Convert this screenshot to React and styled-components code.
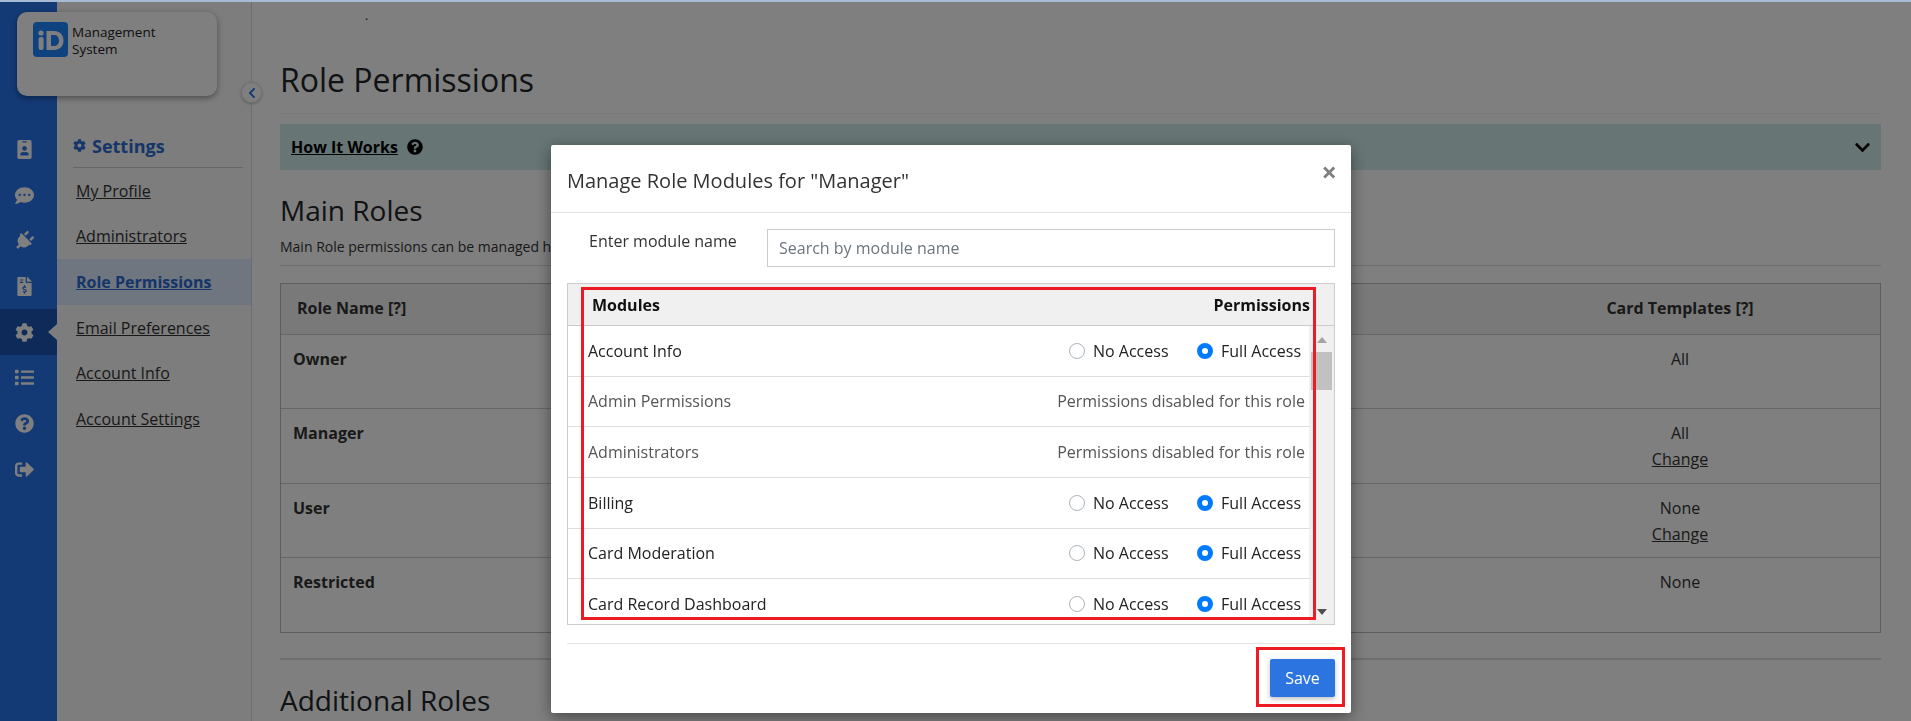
import styled, { createGlobalStyle } from "styled-components";
import {
  FaIdBadge,
  FaCommentDots,
  FaPlug,
  FaFileInvoiceDollar,
  FaCog,
  FaList,
  FaQuestionCircle,
  FaSignOutAlt,
  FaChevronDown,
  FaChevronLeft,
} from "react-icons/fa";

const GlobalStyle = createGlobalStyle`
  * { box-sizing: border-box; }
  html, body { margin: 0; height: 100%; overflow: hidden; }
  body {
    background: #fff;
    color: #333;
    font-family: "Open Sans", "Liberation Sans", sans-serif;
    font-size: 16px;
    line-height: 24px;
  }
`;

const TopStrip = styled.div`
  position: relative;
  z-index: 20;
  height: 2px;
  background: #a9bad4;
`;

const Shell = styled.div`
  position: relative;
  display: flex;
  height: 719px;
  overflow: hidden;
`;

const Rail = styled.nav`
  flex: 0 0 57px;
  padding-top: 124.5px;
  background: #2874ec;
`;

const RailItem = styled.div`
  position: relative;
  display: flex;
  align-items: center;
  justify-content: center;
  width: 48px;
  height: 45.7px;
  font-size: 19px;
  color: #fff;

  ${(p) =>
    p.$active &&
    `
    width: 57px;
    padding-right: 9px;
    background: #1a54b0;
    &::after {
      content: "";
      position: absolute;
      right: 0;
      top: 15px;
      border-style: solid;
      border-width: 8px 9px 8px 0;
      border-color: transparent #fafafa transparent transparent;
    }
  `}
`;

const TiltedPlug = styled(FaPlug)`
  font-size: 20px;
  transform: rotate(45deg);
`;

const LogoCard = styled.div`
  position: absolute;
  left: 17px;
  top: 10px;
  display: flex;
  gap: 4px;
  width: 200px;
  height: 84px;
  padding: 10px 16px;
  background: #fff;
  border-radius: 10px;
  box-shadow: 0 2px 6px rgba(0, 0, 0, 0.4);
`;

const LogoText = styled.div`
  font-size: 13.5px;
  line-height: 16.5px;
  color: #222;
  padding-top: 2px;
`;

const Collapse = styled.button`
  position: absolute;
  left: 241px;
  top: 80px;
  display: flex;
  align-items: center;
  justify-content: center;
  width: 21px;
  height: 21px;
  padding: 0;
  font-size: 12px;
  color: #2874ec;
  background: #fff;
  border: 1px solid #e4e4e4;
  border-radius: 50%;
  box-shadow: 0 1px 3px rgba(0, 0, 0, 0.25);
`;

const Panel = styled.aside`
  flex: 0 0 195px;
  padding-top: 128px;
  background: #fafafa;
  border-right: 1px solid #ddd;
`;

const PanelTitle = styled.div`
  display: flex;
  align-items: center;
  gap: 6px;
  height: 38px;
  margin: 0 8px 0 16px;
  padding-bottom: 6px;
  font-size: 18px;
  font-weight: 700;
  color: #2c6ad0;
  border-bottom: 1px solid #ccc;

  svg { font-size: 13px; }
`;

const PanelLink = styled.a`
  display: flex;
  align-items: center;
  height: 45.6px;
  padding-left: 19px;
  color: ${(p) => (p.$active ? "#2c6ad0" : "#333")};
  font-weight: ${(p) => (p.$active ? 700 : 400)};
  text-decoration: underline;
  background: ${(p) => (p.$active ? "#e0ecff" : "transparent")};
`;

const Main = styled.main`
  flex: 1;
  min-width: 0;
  padding: 0 30px 0 28px;
`;

const Speck = styled.div`
  height: 26px;
  padding: 2px 0 0 85px;
  font-size: 12px;
  line-height: 24px;
  color: #111;
`;

const PageTitle = styled.h1`
  margin: 0 0 10px;
  padding: 28px 0 9px;
  font-size: 32px;
  font-weight: 400;
  line-height: 48px;
  color: #212529;
  border-bottom: 1px solid rgba(0, 0, 0, 0.04);
`;

const HelpBar = styled.div`
  display: flex;
  align-items: center;
  gap: 9px;
  height: 46px;
  padding: 0 10px 0 11px;
  background: #ceecea;
  color: #000;
  font-weight: 700;

  span { text-decoration: underline; }
  svg:last-child { margin-left: auto; font-size: 17px; }
`;

const SectionTitle = styled.h2`
  margin: 19px 0 0;
  font-size: 28px;
  font-weight: 400;
  line-height: 42px;
  color: #212529;
`;

const SectionNote = styled.p`
  margin: 5px 0 0;
  padding-bottom: 8px;
  font-size: 14px;
  line-height: 21px;
  color: #333;
  border-bottom: 1px solid #ddd;
`;

const RoleTable = styled.div`
  margin-top: 17px;
  border: 1px solid #bbb;
`;

const RoleRow = styled.div`
  display: grid;
  grid-template-columns: 1fr 400px;
  height: ${(p) => (p.$head ? 51 : 74.25)}px;
  padding-top: 12px;
  background: ${(p) => (p.$head ? "#f2f2f2" : "#fff")};
  border-bottom: 1px solid #ccc;
  &:last-child { height: 74px; border-bottom: 0; }
`;

const RoleName = styled.div`
  padding-left: ${(p) => (p.$head ? 16 : 12)}px;
  font-weight: 700;
`;

const RoleCell = styled.div`
  margin-top: -1px;
  text-align: center;
  line-height: 26px;
  font-weight: ${(p) => (p.$head ? 700 : 400)};
  a { display: block; color: #333; text-decoration: underline; }
`;

const Rule = styled.hr`
  margin: 25px 0 0;
  border: 0;
  border-top: 2px solid #ddd;
`;

const Backdrop = styled.div`
  position: fixed;
  inset: 2px 0 0;
  z-index: 10;
  display: flex;
  justify-content: center;
  padding: 143px 9px 0 0;
  background: rgba(0, 0, 0, 0.5);
`;

const Modal = styled.div`
  position: relative;
  width: 800px;
  height: 568px;
  background: #fff;
  border-radius: 2px;
  box-shadow: 0 4px 16px rgba(0, 0, 0, 0.45);
`;

const ModalHead = styled.header`
  display: flex;
  justify-content: space-between;
  height: 68px;
  padding: 21px 16px 0;
  border-bottom: 1px solid #dee2e6;
`;

const ModalTitle = styled.h3`
  margin: 0;
  font-size: 20px;
  font-weight: 400;
  line-height: 30px;
  color: #333;
`;

const CloseButton = styled.button`
  height: 20px;
  margin: -4px -2px 0 0;
  padding: 0;
  font-family: inherit;
  font-size: 27px;
  font-weight: 700;
  line-height: 20px;
  color: #808080;
  background: none;
  border: 0;
`;

const ModalBody = styled.div`
  padding: 16px 16px 0;
`;

const SearchRow = styled.div`
  display: flex;
`;

const SearchLabel = styled.label`
  flex: 0 0 200px;
  padding-left: 22px;
  color: #333;
`;

const SearchInput = styled.input`
  flex: 1;
  height: 38px;
  padding: 0 11px;
  font-family: inherit;
  font-size: 16px;
  color: #333;
  background: #fff;
  border: 1px solid #ccc;
  border-radius: 0;
  &::placeholder { color: #6c757d; opacity: 1; }
`;

const ModuleTable = styled.div`
  height: 342px;
  margin-top: 16px;
  border: 1px solid #ccc;
  overflow: hidden;
`;

const ModuleHead = styled.div`
  display: flex;
  justify-content: space-between;
  align-items: center;
  height: 42px;
  padding: 0 24px;
  font-weight: 700;
  color: #111;
  background: #f0f0f0;
  border-bottom: 1px solid #ccc;
`;

const ModuleBody = styled.div`
  display: flex;
  height: 299px;
`;

const ModuleRows = styled.div`
  flex: 1;
  min-width: 0;
  overflow: hidden;
`;

const ModuleRow = styled.div`
  display: flex;
  justify-content: space-between;
  align-items: center;
  height: 50.67px;
  padding: 0 4px 0 20px;
  color: ${(p) => (p.$disabled ? "#555" : "#222")};
  border-bottom: 1px solid #ddd;
`;

const Options = styled.div`
  display: flex;
  gap: 28px;
  padding-right: 4px;
`;

const Option = styled.label`
  display: flex;
  align-items: center;
  gap: 8.5px;
`;

const Radio = styled.input.attrs({ type: "radio" })`
  appearance: none;
  width: 16px;
  height: 16px;
  margin: 0;
  background: #fff;
  border: 1px solid #adb5bd;
  border-radius: 50%;
  &:checked { border: 5px solid #007bff; }
`;

const Scrollbar = styled.div`
  flex: 0 0 25px;
  display: flex;
  flex-direction: column;
  align-items: center;
  padding: 11px 0 10px;
  background: #f0f0f0;
`;

const Arrow = styled.div`
  width: 0;
  height: 0;
  border-style: solid;
  border-color: transparent;
  border-width: ${(p) => (p.$down ? "6px 5.5px 0" : "0 5.5px 6px")};
  border-top-color: ${(p) => (p.$down ? "#505050" : "transparent")};
  border-bottom-color: ${(p) => (p.$down ? "transparent" : "#a3a3a3")};
  margin-top: ${(p) => (p.$down ? "auto" : 0)};
`;

const Thumb = styled.div`
  width: 21px;
  height: 38px;
  margin-top: 9px;
  background: #c1c1c1;
`;

const ModalFoot = styled.footer`
  display: flex;
  justify-content: flex-end;
  margin-top: 18px;
  padding-top: 15px;
  border-top: 1px solid #e5e5e5;
`;

const SaveButton = styled.button`
  width: 65px;
  height: 38px;
  padding: 0;
  font-family: inherit;
  font-size: 16px;
  color: #fff;
  background: #2c75e0;
  border: 0;
  border-radius: 2px;
  box-shadow: 0 2px 5px rgba(0, 0, 0, 0.25);
`;

const Callout = styled.div`
  position: absolute;
  left: ${(p) => p.$x}px;
  top: ${(p) => p.$y}px;
  width: ${(p) => p.$w}px;
  height: ${(p) => p.$h}px;
  border: 3px solid #ed1c24;
  pointer-events: none;
`;

const railIcons = [
  FaIdBadge,
  FaCommentDots,
  TiltedPlug,
  FaFileInvoiceDollar,
  FaCog,
  FaList,
  FaQuestionCircle,
  FaSignOutAlt,
];

const links = [
  "My Profile",
  "Administrators",
  "Role Permissions",
  "Email Preferences",
  "Account Info",
  "Account Settings",
];

const roles = [
  { name: "Owner", value: "All" },
  { name: "Manager", value: "All", change: true },
  { name: "User", value: "None", change: true },
  { name: "Restricted", value: "None" },
];

const modules = [
  { name: "Account Info" },
  { name: "Admin Permissions", disabled: true },
  { name: "Administrators", disabled: true },
  { name: "Billing" },
  { name: "Card Moderation" },
  { name: "Card Record Dashboard" },
];

function Logo() {
  return (
    <svg width="35" height="35" viewBox="0 0 35 35">
      <rect width="35" height="35" rx="4" fill="#1c86ff" />
      <circle cx="8" cy="11" r="2.6" fill="#fff" />
      <rect x="5.6" y="15" width="5" height="13" rx="2" fill="#fff" />
      <path
        fillRule="evenodd"
        fill="#fff"
        d="M13.5 9h7.5c5.6 0 9.5 3.6 9.5 9.5S26.6 28 21 28h-7.5zM18 13v11h3c3 0 5-2 5-5.500S24 13 21 13z"
      />
    </svg>
  );
}

export default function App() {
  return (
    <>
      <GlobalStyle />
      <TopStrip />
      <Shell>
        <Rail>
          {railIcons.map((Icon, i) => (
            <RailItem key={i} $active={i === 4}>
              <Icon />
            </RailItem>
          ))}
        </Rail>
        <Panel>
          <PanelTitle>
            <FaCog />
            Settings
          </PanelTitle>
          {links.map((l) => (
            <PanelLink key={l} $active={l === "Role Permissions"}>
              {l}
            </PanelLink>
          ))}
        </Panel>
        <Main>
          <Speck>.</Speck>
          <PageTitle>Role Permissions</PageTitle>
          <HelpBar>
            <span>How It Works</span>
            <FaQuestionCircle />
            <FaChevronDown />
          </HelpBar>
          <SectionTitle>Main Roles</SectionTitle>
          <SectionNote>Main Role permissions can be managed here.</SectionNote>
          <RoleTable>
            <RoleRow $head>
              <RoleName $head>Role Name [?]</RoleName>
              <RoleCell $head>Card Templates [?]</RoleCell>
            </RoleRow>
            {roles.map((r) => (
              <RoleRow key={r.name}>
                <RoleName>{r.name}</RoleName>
                <RoleCell>
                  {r.value}
                  {r.change && <a>Change</a>}
                </RoleCell>
              </RoleRow>
            ))}
          </RoleTable>
          <Rule />
          <SectionTitle>Additional Roles</SectionTitle>
        </Main>
        <LogoCard>
          <Logo />
          <LogoText>
            Management
            <br />
            System
          </LogoText>
        </LogoCard>
        <Collapse>
          <FaChevronLeft />
        </Collapse>
      </Shell>
      <Backdrop>
        <Modal>
          <ModalHead>
            <ModalTitle>Manage Role Modules for "Manager"</ModalTitle>
            <CloseButton>×</CloseButton>
          </ModalHead>
          <ModalBody>
            <SearchRow>
              <SearchLabel>Enter module name</SearchLabel>
              <SearchInput placeholder="Search by module name" />
            </SearchRow>
            <ModuleTable>
              <ModuleHead>
                <span>Modules</span>
                <span>Permissions</span>
              </ModuleHead>
              <ModuleBody>
                <ModuleRows>
                  {modules.map((m) => (
                    <ModuleRow key={m.name} $disabled={m.disabled}>
                      <span>{m.name}</span>
                      {m.disabled ? (
                        <span>Permissions disabled for this role</span>
                      ) : (
                        <Options>
                          <Option>
                            <Radio name={m.name} />
                            No Access
                          </Option>
                          <Option>
                            <Radio name={m.name} defaultChecked />
                            Full Access
                          </Option>
                        </Options>
                      )}
                    </ModuleRow>
                  ))}
                </ModuleRows>
                <Scrollbar>
                  <Arrow />
                  <Thumb />
                  <Arrow $down />
                </Scrollbar>
              </ModuleBody>
            </ModuleTable>
            <ModalFoot>
              <SaveButton>Save</SaveButton>
            </ModalFoot>
          </ModalBody>
          <Callout $x={30} $y={142} $w={735} $h={333} />
          <Callout $x={705} $y={502} $w={89} $h={60} />
        </Modal>
      </Backdrop>
    </>
  );
}
